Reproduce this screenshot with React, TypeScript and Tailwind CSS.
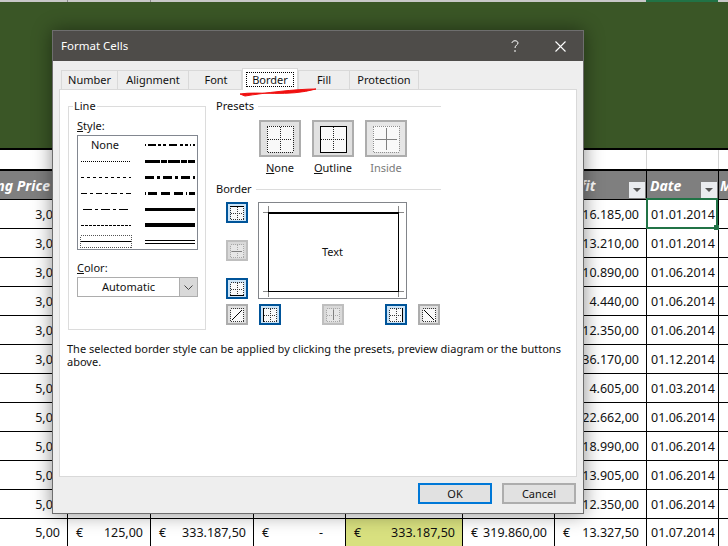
import { ReactNode } from "react";

const GRID = "grid grid-cols-[67px_83px_103px_92px_117px_92px_92px_72px_10px]";
const CELL = "h-full border-l border-black overflow-hidden flex items-center justify-end whitespace-nowrap pt-[2px]";

const ROWS = [
  ["3,00", "16.185,00", "01.01.2014"],
  ["3,00", "13.210,00", "01.01.2014"],
  ["3,00", "10.890,00", "01.06.2014"],
  ["3,00", "4.440,00", "01.06.2014"],
  ["3,00", "12.350,00", "01.06.2014"],
  ["3,00", "36.170,00", "01.12.2014"],
  ["5,00", "4.605,00", "01.03.2014"],
  ["5,00", "22.662,00", "01.06.2014"],
  ["5,00", "18.990,00", "01.06.2014"],
  ["5,00", "13.905,00", "01.06.2014"],
  ["5,00", "12.350,00", "01.06.2014"],
];

function FilterButton() {
  return (
    <div className="w-[16px] h-[16px] self-end mb-[1px] bg-[#eaecef] flex items-center justify-center shrink-0">
      <svg width="8" height="4" viewBox="0 0 8 4">
        <path d="M0 0h8L4 4z" fill="#555" />
      </svg>
    </div>
  );
}

function Money({ value, className = "" }: { value: string; className?: string }) {
  return (
    <div className={`${CELL} !justify-between pl-[8px] pr-[7px] ${className}`}>
      <span>€</span>
      <span>{value}</span>
    </div>
  );
}

function Sheet() {
  return (
    <div className="w-[728px] font-['Noto_Sans',sans-serif] text-[12.5px] text-[#111]">
      <div className={`${GRID} h-[2px] bg-[#c8c8c8]`}>
        <div />
        <div className="border-l border-[#8a8a8a]" />
        <div className="border-l border-[#8a8a8a]" />
        <div /><div /><div /><div />
        <div className="bg-[#217346]" />
      </div>
      <div className="h-[146px] bg-[#3a5626]" />
      <div className="h-[2px] bg-black" />
      <div className={`${GRID} h-[19px] bg-white`}>
        <div /><div className="border-l border-[#d4d4d4]" /><div className="border-l border-[#d4d4d4]" />
        <div className="border-l border-[#d4d4d4]" /><div className="border-l border-[#d4d4d4]" /><div className="border-l border-[#d4d4d4]" />
        <div className="border-l border-[#d4d4d4]" /><div className="border-l border-[#d4d4d4]" /><div className="border-l border-[#d4d4d4]" />
      </div>
      <div className="h-[2px] bg-black" />
      <div className={`${GRID} h-[28px] bg-[#7f7f7f] text-white font-bold italic text-[14px]`}>
        <div className="h-full flex items-center justify-end overflow-hidden whitespace-nowrap pr-[17px] pt-[1px]">Selling Price</div>
        <div className={CELL} /><div className={CELL} /><div className={CELL} /><div className={CELL} /><div className={CELL} />
        <div className={`${CELL} !justify-between pl-[3px] pr-[1px] !pt-[1px]`}>
          <span>Profit</span>
          <FilterButton />
        </div>
        <div className={`${CELL} !justify-between pl-[3px] pr-[1px] !pt-[1px]`}>
          <span>Date</span>
          <FilterButton />
        </div>
        <div className={`${CELL} !justify-start pl-[1px] !pt-[1px]`}>M</div>
      </div>
      {ROWS.map((row, i) => (
        <div key={i} className={`${GRID} h-[29px] bg-white border-t border-black`}>
          <div className="h-full flex items-center justify-end pr-[7px] pt-[2px]">{row[0]}</div>
          <div className={CELL} /><div className={CELL} /><div className={CELL} /><div className={CELL} /><div className={CELL} />
          <div className={`${CELL} pr-[7px]`}>{row[1]}</div>
          <div className={`${CELL} !justify-start pl-[4px]`}>{row[2]}</div>
          <div className={CELL} />
        </div>
      ))}
      <div className={`${GRID} h-[28px] bg-white border-t border-black`}>
        <div className="h-full flex items-center justify-end pr-[7px] pt-[2px]">5,00</div>
        <Money value="125,00" />
        <Money value="333.187,50" />
        <div className={`${CELL} !justify-between pl-[8px] pr-[22px]`}>
          <span>€</span>
          <span>-</span>
        </div>
        <Money value="333.187,50" className="bg-[#d8e07f]" />
        <Money value="319.860,00" />
        <Money value="13.327,50" />
        <div className={`${CELL} !justify-start pl-[4px]`}>01.07.2014</div>
        <div className={CELL} />
      </div>
    </div>
  );
}

function PresetIcon({ kind }: { kind: "none" | "outline" | "inside" }) {
  const dot = kind === "inside" ? "#8f8f8f" : "#222";
  return (
    <svg width="28" height="28" viewBox="0 0 28 28" shapeRendering="crispEdges">
      <rect x="1" y="1" width="26" height="26" fill="#f9f9f9" />
      {kind === "outline" ? (
        <rect x="1" y="1" width="26" height="26" fill="none" stroke="#000" strokeWidth="1" />
      ) : (
        <rect x="1" y="1" width="26" height="26" fill="none" stroke={dot} strokeDasharray="1 1" />
      )}
      {kind === "inside" ? (
        <path d="M14 3v22M3 14h22" stroke="#808080" fill="none" />
      ) : (
        <path d="M14 2v24M2 14h24" stroke="#222" strokeDasharray="1 1" fill="none" />
      )}
    </svg>
  );
}

function Preset({ kind, label, mark }: { kind: "none" | "outline" | "inside"; label: string; mark?: boolean }) {
  return (
    <div className="w-[42px] flex flex-col items-center">
      <div className={`w-[42px] h-[37px] border-2 border-[#adadad] flex items-center justify-center ${kind === "inside" ? "bg-[#e6e6e6]" : "bg-[#e1e1e1]"}`}>
        <PresetIcon kind={kind} />
      </div>
      <div className={`mt-[4px] h-[14px] leading-[14px] whitespace-nowrap ${kind === "inside" ? "text-[#7a7a7a]" : ""}`}>
        {mark ? <span className="underline">{label[0]}</span> : label[0]}
        {label.slice(1)}
      </div>
    </div>
  );
}

function EdgeButton({ on, off, plain, children }: { on?: boolean; off?: boolean; plain?: boolean; children: ReactNode }) {
  const tone = on ? "bg-[#cce4f7] border-[#005499]" : off ? "bg-[#d9d9d9] border-[#bfbfbf]" : "bg-[#e1e1e1] border-[#adadad]";
  const stroke = off ? "#a8a8a8" : "#333";
  return (
    <div className={`w-[22px] h-[21px] border-2 flex items-center justify-center ${tone}`}>
      <svg width="14" height="14" viewBox="0 0 14 14">
        <rect x="0.5" y="0.5" width="13" height="13" fill={off ? "#e6e6e6" : "#f9f9f9"} stroke={stroke} strokeDasharray="1 1" shapeRendering="crispEdges" />
        {!plain && <path d="M7.5 1v12M1 7.5h12" stroke={stroke} strokeDasharray="1 1" fill="none" shapeRendering="crispEdges" />}
        <g stroke={off ? "#808080" : "#000"} fill="none">{children}</g>
      </svg>
    </div>
  );
}

function StyleSample() {
  const dash = (y: number, x1: number, x2: number, w: number, d?: string) => (
    <line x1={x1} x2={x2} y1={y} y2={y} stroke="#000" strokeWidth={w} strokeDasharray={d} shapeRendering="crispEdges" />
  );
  return (
    <svg width="119" height="113" viewBox="0 0 119 113" className="absolute left-0 top-0">
      {dash(25.5, 3, 53, 1, "1 1")}
      {dash(41.5, 3, 53, 1, "3 3")}
      {dash(57.5, 3, 53, 1, "6 3 3 3")}
      {dash(73.5, 5, 53, 1, "9 3 3 3")}
      {dash(89.5, 3, 53, 1, "3 1")}
      {dash(105.5, 3, 53, 1)}
      <rect x="2.5" y="99.5" width="51" height="12" fill="none" stroke="#555" strokeDasharray="1 1" shapeRendering="crispEdges" />
      {dash(9, 67, 117, 2, "1 2 8 2 3 2 3 3 8 3 3 2 3 2")}
      {dash(25, 67, 117, 3, "15 1 6 1 12 1 6 1")}
      {dash(41, 67, 117, 3, "9 3 3 3")}
      {dash(57, 67, 117, 3, "1 2 9 4 9 4 9 3")}
      {dash(73, 67, 117, 3)}
      {dash(89, 67, 117, 4)}
      {dash(104.5, 67, 117, 1)}
      {dash(107.5, 67, 117, 1)}
    </svg>
  );
}

function Heading({ label }: { label: string }) {
  return (
    <div className="h-[14px] leading-[14px] flex items-center gap-[4px]">
      <span>{label}</span>
      <div className="flex-1 h-px bg-[#dcdcdc]" />
    </div>
  );
}

function BorderTab() {
  return (
    <div className="h-[388px] mx-[6px] bg-white border border-[#d9d9d9] text-[#111]">
      <div className="flex pl-[8px] pt-[9px]">
        <fieldset className="w-[138px] h-[231px] border border-[#dcdcdc] pl-[8px] block">
          <legend className="-ml-[4px] px-[1px] h-[14px] leading-[14px]">Line</legend>
          <div className="mt-[6px] h-[14px] leading-[14px]"><span className="underline">S</span>tyle:</div>
          <div className="relative mt-[2px] w-[121px] h-[115px] border border-[#828790]">
            <span className="absolute left-[13px] top-[2px] leading-[14px]">None</span>
            <StyleSample />
          </div>
          <div className="mt-[11px] h-[14px] leading-[14px]"><span className="underline">C</span>olor:</div>
          <div className="mt-[2px] w-[121px] h-[20px] border border-[#adadad] flex">
            <div className="flex-1 flex items-center justify-center bg-white leading-[14px]">Automatic</div>
            <div className="w-[18px] bg-[#d9d9d9] border-l border-[#adadad] flex items-center justify-center">
              <svg width="9" height="5" viewBox="0 0 9 5"><path d="M0.5 0.5L4.5 4.5L8.5 0.5" fill="none" stroke="#444" /></svg>
            </div>
          </div>
        </fieldset>
        <div className="ml-[10px] w-[225px]">
          <Heading label="Presets" />
          <div className="flex gap-[11px] ml-[43px] mt-[7px]">
            <Preset kind="none" label="None" mark />
            <Preset kind="outline" label="Outline" mark />
            <Preset kind="inside" label="Inside" />
          </div>
          <div className="mt-[7px]"><Heading label="Border" /></div>
          <div className="ml-[10px] mt-[6px] grid grid-cols-[22px_149px_32px] grid-rows-[97px_21px] gap-x-[10px] gap-y-[5px] w-[214px]">
            <div className="flex flex-col justify-between">
              <EdgeButton on><path d="M0 0.5h14" strokeWidth="1" /></EdgeButton>
              <div className="mt-[16px]">
                <EdgeButton off><path d="M2 7.5h10" /></EdgeButton>
              </div>
              <div className="mt-[16px]">
                <EdgeButton on><path d="M0 13.5h14" /></EdgeButton>
              </div>
            </div>
            <div className="relative border border-[#82858a] bg-white flex items-center justify-center">
              <div className="w-[131px] h-[80px] ml-[2px] mt-[2px] pr-[2px] border border-black border-t-2 flex items-center justify-center leading-[14px]">Text</div>
              <svg width="147" height="95" viewBox="0 0 147 95" className="absolute left-0 top-0" shapeRendering="crispEdges">
                <path d="M4 9.5h5M140 9.5h5M4 88.5h5M140 88.5h5M9.5 3v6M139.5 3v6M9.5 89v5M139.5 89v5" stroke="#888" fill="none" />
              </svg>
            </div>
            <div />
            <EdgeButton plain><path d="M2 12L12 2" /></EdgeButton>
            <div className="flex">
              <div className="ml-[1px]">
                <EdgeButton on><path d="M0.5 0v14" /></EdgeButton>
              </div>
              <div className="ml-[41px]">
                <EdgeButton off><path d="M7.5 2v10" /></EdgeButton>
              </div>
              <div className="ml-[41px]">
                <EdgeButton on><path d="M13.5 0v14" /></EdgeButton>
              </div>
            </div>
            <div className="ml-[1px]">
              <EdgeButton plain><path d="M2 2L12 12" /></EdgeButton>
            </div>
          </div>
        </div>
      </div>
      <p className="mt-[12px] mx-[7px] leading-[13px]">
        The selected border style can be applied by clicking the presets, preview diagram or the buttons above.
      </p>
    </div>
  );
}

function Dialog() {
  const tabClass = "h-[19px] pt-[1px] border border-b-0 border-[#d9d9d9] flex items-center justify-center";
  return (
    <div className="absolute left-[52px] top-[30px] w-[532px] h-[484px] bg-[#eeeeee] border border-[#6e6e6e] shadow-[0_0_18px_rgba(0,0,0,0.45)] flex flex-col font-['Noto_Sans',sans-serif] text-[11px] text-[#111]">
      <div className="h-[30px] shrink-0 bg-[#4e4c49] text-white flex items-center pl-[8px] text-[11.5px]">
        <span>Format Cells</span>
        <svg width="8" height="12" viewBox="0 0 8 12" className="ml-[383px]">
          <path d="M1 3C1 0 7 0 7 3C7 5 4 5 4 8M4 10v2" fill="none" stroke="#fff" />
        </svg>
        <svg width="11" height="11" viewBox="0 0 11 11" className="ml-[36px]">
          <path d="M0.5 0.5L10.5 10.5M10.5 0.5L0.5 10.5" fill="none" stroke="#fff" strokeWidth="1.1" />
        </svg>
      </div>
      <div className="relative h-[28px] shrink-0">
        <div className="absolute left-[8px] bottom-0 flex items-end z-10">
          <div className={`${tabClass} w-[57px]`}>Number</div>
          <div className={`${tabClass} w-[72px] -ml-px`}>Alignment</div>
          <div className={`${tabClass} w-[54px] -ml-px pl-[2px]`}>Font</div>
          <div className="w-[56px] h-[22px] bg-white border border-b-0 border-[#d9d9d9] relative -mb-px flex items-center justify-center">
            <span className="border border-dotted border-black px-[5px] leading-[13px]">Border</span>
          </div>
          <div className={`${tabClass} w-[52px]`}>Fill</div>
          <div className={`${tabClass} w-[70px] -ml-px`}>Protection</div>
        </div>
      </div>
      <BorderTab />
      <div className="flex justify-end gap-[10px] pr-[7px] mt-[6px]">
        <div className="w-[74px] h-[21px] pt-[1px] bg-[#e1e1e1] border-2 border-[#0078d7] flex items-center justify-center">OK</div>
        <div className="w-[74px] h-[21px] pt-[1px] bg-[#e1e1e1] border-2 border-[#adadad] flex items-center justify-center">Cancel</div>
      </div>
      <svg width="90" height="12" viewBox="0 0 90 12" className="absolute left-[185px] top-[55px] z-20">
        <path d="M2 8C20 5 50 11 78 3C58 3 26 7 7 10Z" fill="#f01010" stroke="#f01010" strokeWidth="1" />
      </svg>
    </div>
  );
}

export default function App() {
  return (
    <div className="relative w-[728px] h-[546px] overflow-hidden bg-white">
      <Sheet />
      <Dialog />
      <div className="absolute left-[646px] top-[198px] w-[72px] h-[31px] border-2 border-[#217346]">
        <div className="absolute -right-[3px] -bottom-[3px] w-[5px] h-[5px] bg-[#217346]" />
      </div>
    </div>
  );
}
